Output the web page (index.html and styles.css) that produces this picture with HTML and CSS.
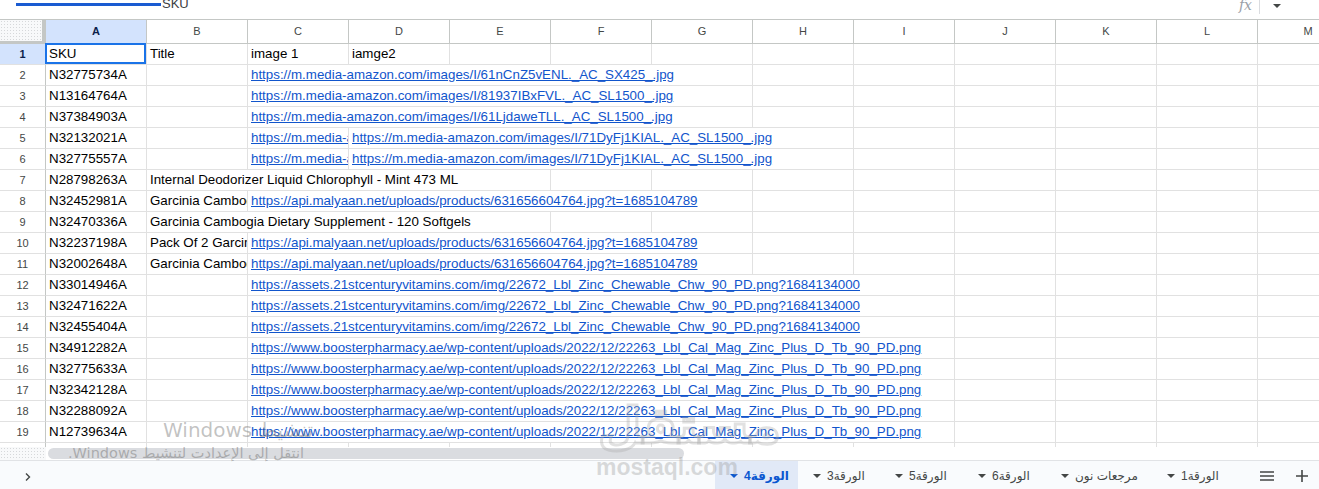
FILE: index.html
```html
<!DOCTYPE html>
<html lang="en">
<head>
<meta charset="utf-8">
<title>Sheet</title>
<link rel="stylesheet" href="styles.css">
</head>
<body>
<div class="topbar">
  <div class="namebox"><div class="namebox-line"></div><span class="namebox-text">SKU</span></div>
  <div class="spacer"></div>
  <span class="fx">fx</span>
  <div class="sep"></div>
  <div class="caret"></div>
</div>

<div class="sheet">
  <div class="row colhead">
    <div class="corner"></div>
    <div class="ch sel">A</div><div class="ch">B</div><div class="ch">C</div><div class="ch">D</div><div class="ch">E</div><div class="ch">F</div><div class="ch">G</div><div class="ch">H</div><div class="ch">I</div><div class="ch">J</div><div class="ch">K</div><div class="ch">L</div><div class="ch">M</div>
  </div>

  <div class="row">
    <div class="rh sel">1</div>
    <div class="c a1">SKU</div><div class="c">Title</div><div class="c">image 1</div><div class="c">iamge2</div><div class="c"></div><div class="c"></div><div class="c"></div><div class="c"></div><div class="c"></div><div class="c"></div><div class="c"></div><div class="c"></div><div class="c"></div>
  </div>

  <div class="row">
    <div class="rh">2</div>
    <div class="c">N32775734A</div><div class="c"></div><div class="c s5"><a href="#">https://m.media-amazon.com/images/I/61nCnZ5vENL._AC_SX425_.jpg</a></div><div class="c"></div><div class="c"></div><div class="c"></div><div class="c"></div><div class="c"></div><div class="c"></div>
  </div>

  <div class="row">
    <div class="rh">3</div>
    <div class="c">N13164764A</div><div class="c"></div><div class="c s5"><a href="#">https://m.media-amazon.com/images/I/81937IBxFVL._AC_SL1500_.jpg</a></div><div class="c"></div><div class="c"></div><div class="c"></div><div class="c"></div><div class="c"></div><div class="c"></div>
  </div>

  <div class="row">
    <div class="rh">4</div>
    <div class="c">N37384903A</div><div class="c"></div><div class="c s5"><a href="#">https://m.media-amazon.com/images/I/61LjdaweTLL._AC_SL1500_.jpg</a></div><div class="c"></div><div class="c"></div><div class="c"></div><div class="c"></div><div class="c"></div><div class="c"></div>
  </div>

  <div class="row">
    <div class="rh">5</div>
    <div class="c">N32132021A</div><div class="c"></div><div class="c"><a href="#">https://m.media-amazon.com/images/I/71DyFj1KIAL._AC_SL1500_.jpg</a></div><div class="c s5"><a href="#">https://m.media-amazon.com/images/I/71DyFj1KIAL._AC_SL1500_.jpg</a></div><div class="c"></div><div class="c"></div><div class="c"></div><div class="c"></div><div class="c"></div>
  </div>

  <div class="row">
    <div class="rh">6</div>
    <div class="c">N32775557A</div><div class="c"></div><div class="c"><a href="#">https://m.media-amazon.com/images/I/71DyFj1KIAL._AC_SL1500_.jpg</a></div><div class="c s5"><a href="#">https://m.media-amazon.com/images/I/71DyFj1KIAL._AC_SL1500_.jpg</a></div><div class="c"></div><div class="c"></div><div class="c"></div><div class="c"></div><div class="c"></div>
  </div>

  <div class="row">
    <div class="rh">7</div>
    <div class="c">N28798263A</div><div class="c s4">Internal Deodorizer Liquid Chlorophyll - Mint 473 ML</div><div class="c"></div><div class="c"></div><div class="c"></div><div class="c"></div><div class="c"></div><div class="c"></div><div class="c"></div><div class="c"></div>
  </div>

  <div class="row">
    <div class="rh">8</div>
    <div class="c">N32452981A</div><div class="c">Garcinia Cambogia Dietary Supplement - 60 Capsules</div><div class="c s5"><a href="#">https://api.malyaan.net/uploads/products/631656604764.jpg?t=1685104789</a></div><div class="c"></div><div class="c"></div><div class="c"></div><div class="c"></div><div class="c"></div><div class="c"></div>
  </div>

  <div class="row">
    <div class="rh">9</div>
    <div class="c">N32470336A</div><div class="c s4">Garcinia Cambogia Dietary Supplement - 120 Softgels</div><div class="c"></div><div class="c"></div><div class="c"></div><div class="c"></div><div class="c"></div><div class="c"></div><div class="c"></div><div class="c"></div>
  </div>

  <div class="row">
    <div class="rh">10</div>
    <div class="c">N32237198A</div><div class="c">Pack Of 2 Garcinia Cambogia Dietary Supplement</div><div class="c s5"><a href="#">https://api.malyaan.net/uploads/products/631656604764.jpg?t=1685104789</a></div><div class="c"></div><div class="c"></div><div class="c"></div><div class="c"></div><div class="c"></div><div class="c"></div>
  </div>

  <div class="row">
    <div class="rh">11</div>
    <div class="c">N32002648A</div><div class="c">Garcinia Cambogia Dietary Supplement - 60 Capsules</div><div class="c s5"><a href="#">https://api.malyaan.net/uploads/products/631656604764.jpg?t=1685104789</a></div><div class="c"></div><div class="c"></div><div class="c"></div><div class="c"></div><div class="c"></div><div class="c"></div>
  </div>

  <div class="row">
    <div class="rh">12</div>
    <div class="c">N33014946A</div><div class="c"></div><div class="c s7"><a href="#">https://assets.21stcenturyvitamins.com/img/22672_Lbl_Zinc_Chewable_Chw_90_PD.png?1684134000</a></div><div class="c"></div><div class="c"></div><div class="c"></div><div class="c"></div>
  </div>

  <div class="row">
    <div class="rh">13</div>
    <div class="c">N32471622A</div><div class="c"></div><div class="c s7"><a href="#">https://assets.21stcenturyvitamins.com/img/22672_Lbl_Zinc_Chewable_Chw_90_PD.png?1684134000</a></div><div class="c"></div><div class="c"></div><div class="c"></div><div class="c"></div>
  </div>

  <div class="row">
    <div class="rh">14</div>
    <div class="c">N32455404A</div><div class="c"></div><div class="c s7"><a href="#">https://assets.21stcenturyvitamins.com/img/22672_Lbl_Zinc_Chewable_Chw_90_PD.png?1684134000</a></div><div class="c"></div><div class="c"></div><div class="c"></div><div class="c"></div>
  </div>

  <div class="row">
    <div class="rh">15</div>
    <div class="c">N34912282A</div><div class="c"></div><div class="c s7"><a href="#">https://www.boosterpharmacy.ae/wp-content/uploads/2022/12/22263_Lbl_Cal_Mag_Zinc_Plus_D_Tb_90_PD.png</a></div><div class="c"></div><div class="c"></div><div class="c"></div><div class="c"></div>
  </div>

  <div class="row">
    <div class="rh">16</div>
    <div class="c">N32775633A</div><div class="c"></div><div class="c s7"><a href="#">https://www.boosterpharmacy.ae/wp-content/uploads/2022/12/22263_Lbl_Cal_Mag_Zinc_Plus_D_Tb_90_PD.png</a></div><div class="c"></div><div class="c"></div><div class="c"></div><div class="c"></div>
  </div>

  <div class="row">
    <div class="rh">17</div>
    <div class="c">N32342128A</div><div class="c"></div><div class="c s7"><a href="#">https://www.boosterpharmacy.ae/wp-content/uploads/2022/12/22263_Lbl_Cal_Mag_Zinc_Plus_D_Tb_90_PD.png</a></div><div class="c"></div><div class="c"></div><div class="c"></div><div class="c"></div>
  </div>

  <div class="row">
    <div class="rh">18</div>
    <div class="c">N32288092A</div><div class="c"></div><div class="c s7"><a href="#">https://www.boosterpharmacy.ae/wp-content/uploads/2022/12/22263_Lbl_Cal_Mag_Zinc_Plus_D_Tb_90_PD.png</a></div><div class="c"></div><div class="c"></div><div class="c"></div><div class="c"></div>
  </div>

  <div class="row">
    <div class="rh">19</div>
    <div class="c">N12739634A</div><div class="c"></div><div class="c s7"><a href="#">https://www.boosterpharmacy.ae/wp-content/uploads/2022/12/22263_Lbl_Cal_Mag_Zinc_Plus_D_Tb_90_PD.png</a></div><div class="c"></div><div class="c"></div><div class="c"></div><div class="c"></div>
  </div>

  <div class="row">
    <div class="rh">20</div>
    <div class="c"></div><div class="c"></div><div class="c"></div><div class="c"></div><div class="c"></div><div class="c"></div><div class="c"></div><div class="c"></div><div class="c"></div><div class="c"></div><div class="c"></div><div class="c"></div><div class="c"></div>
  </div>
</div>

<div class="hscroll">
  <div class="hs-corner"></div>
  <div class="thumb"></div>
</div>

<div class="tabbar">
  <div class="nav">
    <svg width="10" height="10" viewBox="0 0 10 10"><path d="M3 1.5 L6.5 5 L3 8.5" fill="none" stroke="#444746" stroke-width="1.4"/></svg>
  </div>
  <div class="tabs">
    <div class="tab active w83"><span class="tri"></span><span class="tname" dir="rtl">الورقة4</span></div>
    <div class="tab w82"><span class="tri"></span><span class="tname" dir="rtl">الورقة3</span></div>
    <div class="tab w83"><span class="tri"></span><span class="tname" dir="rtl">الورقة5</span></div>
    <div class="tab w83"><span class="tri"></span><span class="tname" dir="rtl">الورقة6</span></div>
    <div class="tab w106"><span class="tri"></span><span class="tname" dir="rtl">مرجعات نون</span></div>
    <div class="tab w80"><span class="tri"></span><span class="tname" dir="rtl">الورقة1</span></div>
  </div>
  <div class="iconbtn menu">
    <svg width="16" height="12" viewBox="0 0 16 12"><path d="M1 2h14M1 6h14M1 10h14" stroke="#444746" stroke-width="1.5"/></svg>
  </div>
  <div class="iconbtn plus">
    <svg width="14" height="14" viewBox="0 0 14 14"><path d="M7 1v12M1 7h12" stroke="#444746" stroke-width="1.6"/></svg>
  </div>
</div>

<div class="wm-logo" dir="rtl">مستقل</div>
<div class="wm-site">mostaql.com</div>
<div class="win1" dir="rtl">تنشيط Windows</div>
<div class="win2" dir="rtl">انتقل إلى الإعدادت لتنشيط Windows.</div>
</body>
</html>
```
FILE: styles.css
```css
* { box-sizing: border-box; margin: 0; padding: 0; }

html, body {
  width: 1319px;
  height: 489px;
  overflow: hidden;
  background: #ffffff;
}

body {
  font-family: "Liberation Sans", Arial, "DejaVu Sans", sans-serif;
  position: relative;
  display: flex;
  flex-direction: column;
}

/* ---------- top strip ---------- */
.topbar {
  height: 19px;
  flex: none;
  display: flex;
  align-items: flex-start;
  overflow: hidden;
}
.namebox {
  display: flex;
  align-items: flex-start;
  margin-left: 16px;
}
.namebox-line {
  width: 145px;
  height: 3px;
  background: #1a5bd1;
  margin-top: 3px;
}
.namebox-text {
  font-size: 13px;
  line-height: 13px;
  color: #3c4043;
  margin-top: -3px;
  margin-left: 1px;
}
.spacer { flex: 1; }
.fx {
  font-family: "DejaVu Serif", "Liberation Serif", serif;
  font-style: italic;
  font-size: 14px;
  line-height: 12px;
  color: #9aa0a6;
  margin-top: -1px;
}
.sep {
  width: 1px;
  height: 14px;
  background: #dadce0;
  margin: 0 13px 0 7px;
}
.caret {
  width: 0;
  height: 0;
  border-left: 4px solid transparent;
  border-right: 4px solid transparent;
  border-top: 4px solid #444746;
  margin-top: 4px;
  margin-right: 38px;
}

/* ---------- grid ---------- */
.sheet {
  height: 428px;
  flex: none;
  overflow: hidden;
  border-top: 1px solid #c4c7c5;
}
.row {
  display: grid;
  grid-template-columns: 46px repeat(13, 101px);
  height: 21px;
}
.row.colhead { height: 24px; }

.corner {
  background-color: #f8f9fa;
  background-image: radial-gradient(#d6d8da 0.7px, transparent 0.8px);
  background-size: 3px 3px;
  border-right: 4px solid #c4c7c5;
  border-bottom: 3px solid #c4c7c5;
}
.ch {
  border-right: 1px solid #c4c7c5;
  border-bottom: 1px solid #c4c7c5;
  text-align: center;
  font-size: 11px;
  line-height: 23px;
  color: #444746;
}
.ch.sel {
  background: #d3e3fd;
  color: #0b1f4b;
  font-weight: bold;
}
.rh {
  border-right: 1px solid #c4c7c5;
  border-bottom: 1px solid #e1e1e1;
  text-align: center;
  font-size: 11px;
  line-height: 20px;
  color: #444746;
}
.rh.sel {
  background: #d3e3fd;
  color: #0b1f4b;
  font-weight: bold;
}
.c {
  border-right: 1px solid #e1e1e1;
  border-bottom: 1px solid #e1e1e1;
  font-size: 13.33px;
  line-height: 20px;
  padding: 0 3px;
  white-space: nowrap;
  overflow: hidden;
  color: #000000;
}
.c a {
  color: #1155cc;
  text-decoration: underline;
}
.s4 { grid-column: span 4; }
.s5 { grid-column: span 5; }
.s7 { grid-column: span 7; }

.a1 { position: relative; overflow: visible; }
.a1::after {
  content: "";
  position: absolute;
  top: -1px;
  left: -1px;
  right: 0;
  bottom: 0;
  border: 2px solid #1a73e8;
}

/* ---------- horizontal scroll strip ---------- */
.hscroll {
  height: 13px;
  flex: none;
  display: flex;
  align-items: center;
}
.hs-corner {
  width: 46px;
  height: 13px;
  background-color: #f8f9fa;
  background-image: radial-gradient(#d6d8da 0.7px, transparent 0.8px);
  background-size: 3px 3px;
}
.thumb {
  width: 636px;
  height: 11px;
  margin-left: 2px;
  border-radius: 6px;
  background: #dadce0;
}

/* ---------- sheet tabs ---------- */
.tabbar {
  height: 29px;
  flex: none;
  display: flex;
  align-items: stretch;
  background: #f9fbfd;
  border-top: 1px solid #e1e3e6;
}
.nav {
  width: 56px;
  display: flex;
  align-items: center;
  padding-left: 23px;
  padding-top: 3px;
}
.tabs {
  margin-left: auto;
  display: flex;
  align-items: stretch;
}
.tab {
  display: flex;
  align-items: center;
  gap: 6px;
  padding-left: 15px;
  padding-top: 2px;
  font-size: 12px;
  color: #444746;
  white-space: nowrap;
}
.tab.active {
  background: #e1e9f7;
  color: #0b57d0;
  font-weight: bold;
}
.w80 { width: 80px; }
.w82 { width: 82px; }
.w83 { width: 83px; }
.w106 { width: 106px; }
.tri {
  width: 0;
  height: 0;
  border-left: 4px solid transparent;
  border-right: 4px solid transparent;
  border-top: 4px solid #444746;
}
.tab.active .tri { border-top-color: #0b57d0; }

.iconbtn {
  display: flex;
  align-items: center;
  justify-content: center;
  padding-top: 2px;
}
.menu { width: 36px; margin-left: 17px; }
.plus { width: 34px; }

/* ---------- overlays (watermarks) ---------- */
.wm-logo {
  position: absolute;
  left: 598px;
  top: 396px;
  font-family: "DejaVu Sans", sans-serif;
  font-size: 50px;
  font-weight: bold;
  line-height: 60px;
  color: transparent;
  -webkit-text-stroke: 3px rgba(170, 170, 170, 0.35);
  pointer-events: none;
}
.wm-site {
  position: absolute;
  left: 596px;
  top: 455px;
  font-family: "Liberation Sans", sans-serif;
  font-size: 23px;
  font-weight: bold;
  line-height: 24px;
  color: rgba(150, 150, 150, 0.35);
  pointer-events: none;
}
.win1 {
  position: absolute;
  left: 163px;
  top: 419px;
  font-family: "DejaVu Sans", sans-serif;
  font-size: 20px;
  line-height: 22px;
  color: rgba(120, 120, 120, 0.45);
  white-space: nowrap;
  pointer-events: none;
}
.win2 {
  position: absolute;
  left: 66px;
  top: 445px;
  width: 238px;
  font-family: "DejaVu Sans", sans-serif;
  font-size: 14.5px;
  line-height: 16px;
  color: rgba(120, 120, 120, 0.5);
  white-space: nowrap;
  pointer-events: none;
}
```
